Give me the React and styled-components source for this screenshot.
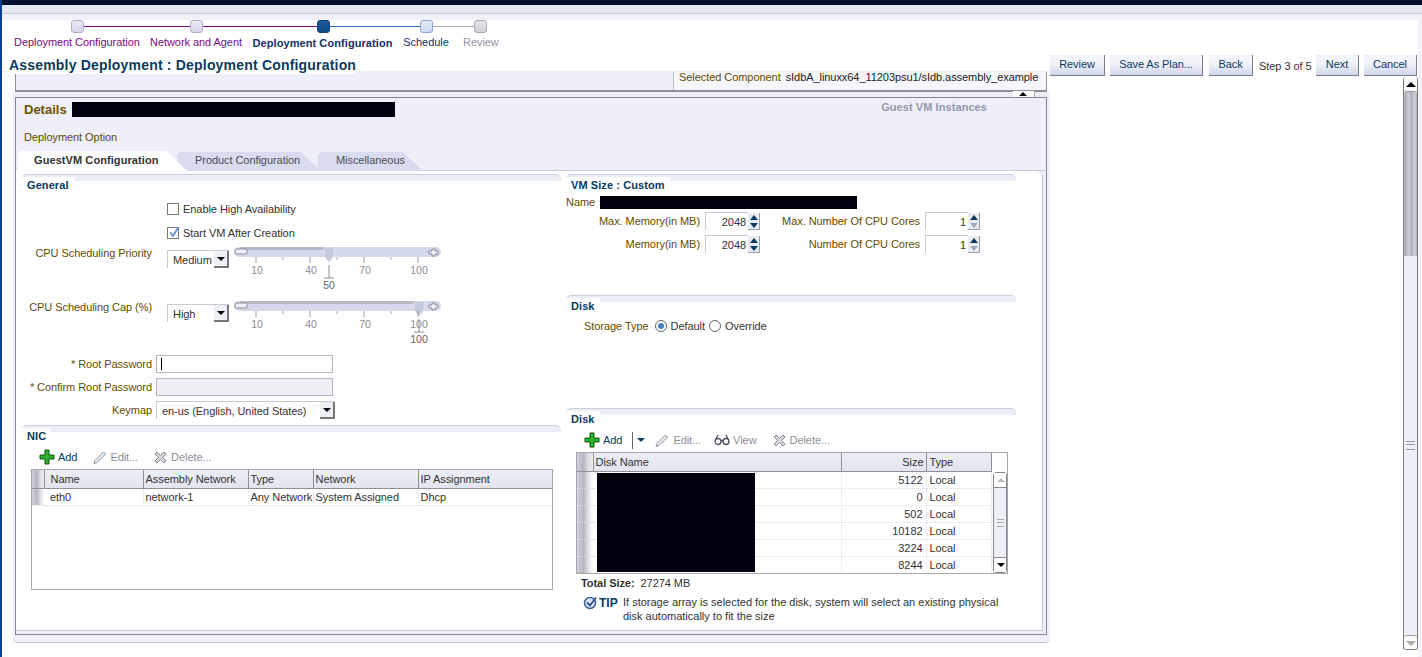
import React from "react";
import styled, { createGlobalStyle } from "styled-components";

const Global = createGlobalStyle`
  html, body { margin: 0; padding: 0; background: #001a3d; overflow: hidden; }
  * { box-sizing: border-box; }
  body { font-family: "Liberation Sans", Arial, sans-serif; font-size: 11px; letter-spacing: -.06px; color: #333; }
`;

const Screen = styled.div`
  width: 1422px; height: 657px; display: flex; flex-direction: column; overflow: hidden;
  background: linear-gradient(90deg, #0a3f8e 0, #0a3f8e 2px, #00102e 2px);
`;
const Frame = styled.div`
  margin: 5px 0 0 2px; flex: 1; background: #fff; border-top-left-radius: 4px; display: flex; flex-direction: column;
  border-right: 4px solid #f3f4fb;
`;
const TopBand = styled.div`
  height: 15px; flex: none; background: linear-gradient(#e4e8f3 0 8px, #c9ccd8 8px 9px, #f1f2f9 9px);
  margin-right: -4px;
`;
const Columns = styled.div`flex: 1; display: flex; min-height: 0;`;
const LeftCol = styled.div`width: 1048px; flex: none; display: flex; flex-direction: column;`;
const RightCol = styled.div`flex: 1; display: flex; flex-direction: column; padding-top: 35px;`;

const TrainTrack = styled.div`display: flex; align-items: center; height: 13px; padding-left: 69px;`;
const Node = styled.div`
  width: 13px; height: 13px; border-radius: 3px; flex: none;
  border: 1px solid ${p => p.$edge}; background: ${p => p.$fill};
`;
const Connector = styled.div`height: 1.5px; flex: none; width: ${p => p.$w}px; background: ${p => p.$c};`;
const TrainLabels = styled.div`display: flex; padding-left: 12px; margin-top: 2px;`;
const TrainLabel = styled.div`
  flex: none; width: ${p => p.$w}px; margin-right: ${p => p.$gap}px; text-align: center; white-space: nowrap;
  line-height: 14px; color: ${p => p.$c}; font-weight: ${p => (p.$bold ? 700 : 400)};
  padding-top: ${p => (p.$bold ? 1 : 0)}px; letter-spacing: ${p => (p.$bold ? ".08px" : "inherit")};
`;
const TitleRow = styled.div`height: 22px; padding: 7px 0 0 7px; box-shadow: inset 0 -1px 0 #eceef5;`;
const Title = styled.h1`
  margin: 0; font-size: 14px; line-height: 17px; font-weight: 700; color: #0b3a5e; letter-spacing: .19px;
  white-space: nowrap; width: fit-content; background: #fff; position: relative; z-index: 1;
`;

const TopPanel = styled.div`
  margin-left: 13px; width: 1032px; height: 20px; flex: none; display: flex; justify-content: flex-end;
  background: #eeeff8; border: solid #8f8f99; border-width: 0 1px 2px 1px; overflow: hidden;
`;
const SelectedBox = styled.div`
  width: 373px; background: #f6f7fc; border-left: 1px solid #b9bcca; padding-left: 5px;
  line-height: 14px; margin-top: -2px; white-space: nowrap; color: #222;
  span { color: #5f4b00; margin-right: 5px; }
`;
const SplitterGrip = styled.div`
  position: absolute; left: 1000px; top: -1px; width: 22px; height: 6px; background: #fff; border: solid #aaa; border-width: 0 1px 0 0;
  &::after { content: ""; position: absolute; left: 6px; top: 1px; border: solid transparent; border-width: 0 4px 4px; border-bottom-color: #000; }
`;
const Shell = styled.div`
  margin-left: 11px; width: 1037px; flex: none; padding: 5px 3px 7px 2px; background: #eeeff8;
  border-bottom: 1px solid #c4c1d6; border-radius: 0 0 5px 5px; position: relative;
`;
const Details = styled.section`
  border: 1px solid #85858f; height: 538px; display: flex; flex-direction: column;
`;
const DetailsHead = styled.div`display: flex; align-items: center; height: 21px; padding: 1px 59px 0 8px; flex: none;`;
const DetailsTitle = styled.h2`margin: 0; width: 48px; font-size: 13px; font-weight: 700; color: #6d5200; letter-spacing: 0; flex: none;`;
const Redact = styled.div`background: #01000f; width: ${p => p.$w}px; height: ${p => p.$h}px; flex: none;`;
const GuestLink = styled.div`margin-left: auto; color: #9398ac; font-weight: 700; letter-spacing: .07px; margin-top: -4px;`;
const Option = styled.div`color: #5f4b00; margin: 11px 0 0 8px; height: 14px; line-height: 14px; flex: none;`;
const Tabs = styled.div`display: flex; height: 20px; margin: 7px 0 0 2px; flex: none; align-items: flex-end; box-shadow: inset 0 -1px 0 #c6cce0;`;
const Tab = styled.div`
  height: ${p => (p.$active ? 20 : 19)}px; width: ${p => p.$w}px; margin-left: ${p => p.$ml || 0}px; flex: none;
  padding-left: ${p => p.$pl}px; line-height: ${p => (p.$active ? 19 : 17)}px; white-space: nowrap;
  background: ${p => (p.$active ? "#fff" : "#d8dcee")};
  color: ${p => (p.$active ? "#333" : "#4a4d55")}; font-weight: ${p => (p.$active ? 700 : 400)};
  letter-spacing: ${p => (p.$active ? ".08px" : "inherit")};
  clip-path: polygon(0 3px, 3px 0, calc(100% - 20px) 0, 100% 100%, 0 100%);
  z-index: ${p => (p.$active ? 2 : 1)};
`;
const Body = styled.div`
  flex: 1; display: flex; gap: 5px; background: #fff; margin-right: 3px; padding: 3px 0 0 6px; min-height: 0;
  border-right: 1px solid #c6cce0; border-bottom: 1px solid #c6cce0; margin-bottom: 3px; border-top-right-radius: 6px;
`;
const Col = styled.div`width: ${p => p.$w}px; flex: none; display: flex; flex-direction: column;`;
const SectionHead = styled.div`
  height: 17px; flex: none; border-top: 1px solid #ccd0de; border-radius: 5px 5px 0 0; margin-top: ${p => p.$mt || 0}px;
  background: linear-gradient(#eceef7 0 6px, #fff 6px);
`;
const SectionTitle = styled.h3`
  margin: 0; padding: 3px 5px 0; display: inline-block; font-size: 11px; line-height: 14px; font-weight: 700; color: #0b3a5e;
  letter-spacing: .08px; background: linear-gradient(transparent 0 2px, #fff 2px); height: 16px;
`;
const CheckRow = styled.label`
  display: flex; align-items: center; gap: 4px; height: 14px; margin: ${p => p.$mt}px 0 0 145px; color: #333;
`;
const CheckBox = styled.span`
  width: 12px; height: 12px; border: 1px solid #777; background: #fff; display: block; flex: none; position: relative;
  svg { position: absolute; left: 0; top: -1px; }
`;
const SliderRow = styled.div`display: flex; height: 45px; margin-top: ${p => p.$mt}px; align-items: flex-start;`;
const RightLabel = styled.div`
  width: ${p => p.$w}px; text-align: right; flex: none; color: #5f4b00; line-height: 14px; white-space: nowrap;
  margin-top: ${p => p.$mt || 0}px;
`;
const SelectBox = styled.div`
  width: ${p => p.$w}px; height: 18px; flex: none; margin: ${p => p.$mt || 0}px ${p => p.$mr || 0}px 0 ${p => p.$ml || 0}px;
  display: flex; align-items: center; justify-content: space-between; padding-left: 5px; color: #333;
  border: 1px solid #c9c9d2; border-right: 0; border-bottom: 0; white-space: nowrap; background: #fff;
`;
const SelectBtn = styled.span`
  width: 15px; height: 17px; background: #eef0f7; border-right: 2px solid #777; border-bottom: 2px solid #777; position: relative; flex: none;
  &::after { content: ""; position: absolute; left: 3px; top: 6px; border: solid transparent; border-width: 4px 4px 0; border-top-color: #000; }
`;
const FormRow = styled.div`display: flex; align-items: center; height: 18px; margin-top: ${p => p.$mt}px;`;
const TextInput = styled.div`
  width: 177px; height: 18px; margin-left: 4px; position: relative; flex: none;
  border: 1px solid #b5b7c2; background: ${p => (p.$off ? "#eef0f6" : "#fff")};
  ${p => p.$caret && `&::before { content: ""; position: absolute; left: 4px; top: 2px; width: 1px; height: 12px; background: #000; }`}
`;
const Toolbar = styled.div`
  display: flex; align-items: center; height: 20px; margin: ${p => p.$mt}px 0 0 ${p => p.$ml}px; flex: none;
`;
const ToolBtn = styled.div`
  display: flex; align-items: center; gap: ${p => p.$gap ?? 3}px; margin-right: ${p => p.$mr ?? 0}px;
  color: ${p => (p.$on ? "#0b3a5e" : "#8c8f9a")}; white-space: nowrap;
`;
const ToolSep = styled.div`
  width: 1px; height: 17px; background: #666; margin: 0 4px 0 0;
`;
const DownTri = styled.span`
  width: 0; height: 0; border: solid transparent; border-width: 4px 4px 0; border-top-color: #0b3a5e; margin-right: 9px;
`;
const TableFrame = styled.div`
  margin: ${p => p.$mt}px 0 0 ${p => p.$ml}px; width: ${p => p.$w}px; height: ${p => p.$h}px; border: 1px solid #a6a6ae; flex: none; position: relative;
  display: flex; overflow: hidden;
`;
const Grid = styled.table`
  border-collapse: collapse; table-layout: fixed; width: ${p => p.$w}px; height: fit-content; flex: none;
`;
const Th = styled.th`
  height: 18px; padding: 0 2px 0 ${p => p.$pl ?? 2}px; font-weight: 400; color: #333; background: linear-gradient(#eceef6, #e2e4ee);
  border-right: 1px solid #8f8f98; border-bottom: 1px solid #8f8f98; text-align: ${p => p.$align || "left"}; white-space: nowrap; overflow: hidden;
  ${p => p.$w && `width: ${p.$w}px;`}
`;
const SelCell = styled.td`
  width: ${p => p.$w}px; padding: 0; background: linear-gradient(90deg, #cfd0d8, #b5b6c0 40%, #dddde5 70%, #fff);
  border-bottom: 1px dotted #dfe1e9;
`;
const SelHead = styled(Th)`
  padding: 0; background: linear-gradient(90deg, #cfd0d8, #b5b6c0 40%, #dddde5 70%, #eee);
`;
const Td = styled.td`
  height: ${p => p.$h}px; padding: 0 3px 0 ${p => p.$pl ?? 5}px; color: #333; white-space: nowrap; overflow: hidden; text-align: ${p => p.$align || "left"};
  border-bottom: 1px dotted #d9dbe5; border-right: 1px dotted #dcdee6;
`;
const DiskRedact = styled(Redact)`position: absolute; left: 20px; top: 20px;`;
const MiniScroll = styled.div`
  flex: 1; margin-top: 19px; margin-left: 1px; display: flex; flex-direction: column; border: 1px solid #85858a; border-radius: 3px; background: #eef0f8;
`;
const MiniBtn = styled.div`
  height: 15px; flex: none; background: #fff; position: relative; border-bottom: ${p => (p.$up ? "1px solid #888" : 0)};
  border-top: ${p => (p.$up ? 0 : "1px solid #888")};
  &::after {
    content: ""; position: absolute; left: 3px; top: 5px; border: solid transparent;
    border-width: ${p => (p.$up ? "0 4px 4px" : "4px 4px 0")};
    ${p => (p.$up ? "border-bottom-color: #bbb;" : "border-top-color: #000;")}
  }
`;
const MiniThumb = styled.div`
  flex: 1; display: flex; align-items: center; justify-content: center;
  &::after { content: ""; width: 7px; height: 6px; border-top: 1px solid #aaa; border-bottom: 1px solid #aaa; background: linear-gradient(transparent 2px, #aaa 2px 3px, transparent 3px); }
`;
const NameRow = styled.div`display: flex; align-items: center; height: 14px; margin-top: 4px; color: #5f4b00; gap: 8px; span { width: 26px; }`;
const SpinRow = styled.div`display: flex; align-items: center; height: 18px; margin-top: ${p => p.$mt}px;`;
const SpinInput = styled.div`
  width: 43px; height: 18px; flex: none; text-align: right; padding-right: 2px; line-height: 18px; color: #333; margin-left: 5px;
  border: 1px solid #c9c9d2; border-right: 0; border-bottom: 0; background: #fff;
`;
const Spin = styled.div`
  width: 12px; height: 17px; flex: none; display: flex; flex-direction: column; border: 1px solid #9a9ea8; border-width: 0 1px 1px 0;
`;
const SpinPart = styled.div`
  flex: 1; background: #e9ebf3; position: relative;
  &::after {
    content: ""; position: absolute; left: 2px; top: 2px; border: solid transparent;
    border-width: ${p => (p.$up ? "0 4px 5px" : "5px 4px 0")};
    ${p => `border-${p.$up ? "bottom" : "top"}-color: ${p.$dim && !p.$up ? "#9fa8b8" : "#0b3a5e"};`}
  }
`;
const RadioRow = styled.div`display: flex; align-items: center; height: 14px; margin: 7px 0 0 18px; color: #333;`;
const StorageLabel = styled.span`color: #5f4b00; margin-right: 6px;`;
const Radio = styled.span`
  width: 12px; height: 12px; border-radius: 50%; border: 1px solid #666; background: #fff; flex: none; margin: 0 4px 0 ${p => p.$ml || 0}px; position: relative;
  ${p => p.$on && `&::after { content: ""; position: absolute; left: 2px; top: 2px; width: 6px; height: 6px; border-radius: 50%; background: #4a7fc0; }`}
`;
const Total = styled.div`margin: 1px 0 0 15px; height: 16px; line-height: 16px; flex: none; b { color: #333; margin-right: 6px; }`;
const TipRow = styled.div`display: flex; margin: 4px 0 0 17px; align-items: flex-start;`;
const TipMark = styled.div`
  display: flex; align-items: center; gap: 1px; font-weight: 700; color: #0b3a5e; width: 40px; flex: none; line-height: 14px; font-size: 12px; letter-spacing: 0;
`;
const TipText = styled.p`margin: 0; width: 385px; line-height: 14px; color: #333; letter-spacing: 0;`;

const ActionBar = styled.div`display: flex; align-items: center; height: 21px; flex: none;`;
const Btn = styled.div`
  width: ${p => p.$w}px; height: 21px; margin-right: ${p => p.$mr}px; flex: none; text-align: center; line-height: 19px; color: #0b3a5e;
  background: linear-gradient(#f6f7fc, #f0f2f9 45%, #ced6ea); border: solid #7b7f8a; border-width: 0 1px 1px 0; box-shadow: inset 0 1px 0 #eef;
`;
const StepInfo = styled.div`width: 57px; flex: none; color: #333; padding-top: 1px; white-space: nowrap;`;
const PageArea = styled.div`flex: 1; display: flex; justify-content: flex-end; margin-top: 1px; margin-bottom: 7px;`;
const Scroll = styled.div`
  width: 15px; display: flex; flex-direction: column; border: solid #7f7a72; border-width: 0 1px 0 1px; border-radius: 3px;
`;
const ScrollBtn = styled.div`
  height: 15px; flex: none; background: #fbfbfd; position: relative; border-radius: 3px;
  border-bottom: ${p => (p.$up ? "1px solid #999" : "1px solid #7f7a72")}; border-top: ${p => (p.$up ? 0 : "1px solid #999")};
  &::after {
    content: ""; position: absolute; left: 2px; top: 5px; border: solid transparent;
    border-width: ${p => (p.$up ? "0 5px 5px" : "5px 5px 0")};
    ${p => (p.$up ? "border-bottom-color: #000;" : "border-top-color: #aaa;")}
  }
`;
const ScrollTrack = styled.div`
  height: 164px; flex: none; background: repeating-linear-gradient(90deg, #b3b6c0 0 3px, #c7c9d2 3px 6px);
`;
const ScrollThumb = styled.div`
  flex: 1; background: #eef0f9; display: flex; align-items: center; justify-content: center;
  &::after { content: ""; width: 9px; height: 7px; border-top: 1px solid #999; border-bottom: 1px solid #999; background: linear-gradient(transparent 2px, #999 2px 3px, transparent 3px); }
`;

const Plus = () => (
  <svg width="16" height="16" viewBox="0 0 16 16"><path d="M6 1h4v5h5v4h-5v5H6v-5H1V6h5z" fill="#2fae2f" stroke="#0d5a0d" strokeWidth="1" /></svg>
);
const PencilIcon = () => (
  <svg width="16" height="16" viewBox="0 0 16 16"><path d="M3 11.5 11.5 3l2 2L5 13.5l-3 1z" fill="#eceef3" stroke="#8d9099" strokeWidth="1" /></svg>
);
const DeleteIcon = () => (
  <svg width="15" height="15" viewBox="0 0 15 15"><path d="M2 4l2-2 3.500 3.500L11 2l2 2-3.500 3.500L13 11l-2 2-3.500-3.500L4 13l-2-2 3.500-3.500z" fill="#d6d8de" stroke="#85878f" strokeWidth="1" /></svg>
);
const GlassesIcon = () => (
  <svg width="16" height="12" viewBox="0 0 16 12" fill="none" stroke="#4a5060" strokeWidth="1.300"><circle cx="4" cy="7.500" r="3" /><circle cx="12" cy="7.500" r="3" /><path d="M7 7q1-1 2 0M2 5l2-4M14 5l-2-4" /></svg>
);
const TipIcon = () => (
  <svg width="15" height="15" viewBox="0 0 15 15"><circle cx="7" cy="8" r="5.500" fill="#dfe6f5" stroke="#3b5f96" strokeWidth="1.500" /><path d="M4 7.500l3 3 6-8" fill="none" stroke="#2c4f86" strokeWidth="1.800" /></svg>
);
const Check = () => (
  <svg width="12" height="12" viewBox="0 0 12 12"><path d="M2 5.500l3 3.500 5-8" fill="none" stroke="#5b8fd0" strokeWidth="1.800" /></svg>
);

const Slider = ({ x, label }) => {
  const ticks = [[22, "10"], [76, "40"], [130, "70"], [184, "100"]];
  const minor = [49, 103, 157];
  return (
    <svg width="208" height="45" viewBox="0 0 208 45">
      <rect x="0" y="0" width="207" height="10" rx="5" fill="#d3d8ea" />
      <rect x="6" y="0" width={x - 6} height="3" fill="#b5b9c8" />
      <rect x="1" y="2" width="12" height="5" rx="1" fill="#eef0f8" stroke="#8b8e9a" />
      <path d="M195 4h3v-2h3v2h3v3h-3v2h-3v-2h-3z" fill="#eef0f8" stroke="#8b8e9a" />
      <path d={`M${x - 5} 0h10v9l-5 6-5-6z`} fill="#c5cadd" stroke="#dfe2ee" />
      {ticks.map(([t]) => <path key={t} d={`M${t} 10v6`} stroke="#9a9dab" />)}
      {minor.map(t => <path key={t} d={`M${t} 10v3`} stroke="#a8abb8" />)}
      {ticks.map(([t, l]) => (
        <text key={l} x={t + 1} y="27" textAnchor="middle" fontSize="10.500" fill="#8a8c94" fontFamily="Liberation Sans">{l}</text>
      ))}
      <path d={`M${x} 18v13M${x - 5} 31h10`} stroke="#8b8e9a" />
      <text x={x} y="42" textAnchor="middle" fontSize="10.500" fill="#666" fontFamily="Liberation Sans">{label}</text>
    </svg>
  );
};

const Spinner = ({ dim }) => (
  <Spin><SpinPart $up /><SpinPart $dim={dim} /></Spin>
);

const disks = ["5122", "0", "502", "10182", "3224", "8244"];

export default function App() {
  return (
    <Screen>
      <Global />
      <Frame>
        <TopBand />
        <Columns>
          <LeftCol>
            <TrainTrack>
              <Node $edge="#b5a9cc" $fill="linear-gradient(#ecebf5,#d8d5e8)" />
              <Connector $w={106} $c="#7c0a83" />
              <Node $edge="#b5a9cc" $fill="linear-gradient(#ecebf5,#d8d5e8)" />
              <Connector $w={114} $c="#7c0a83" />
              <Node $edge="#0f3f78" $fill="linear-gradient(#1c5b9c,#0f4a86)" />
              <Connector $w={90} $c="#2a74c0" />
              <Node $edge="#8fa6d4" $fill="linear-gradient(#e3e9f8,#cdd8f1)" />
              <Connector $w={41} $c="#a9abb3" />
              <Node $edge="#a5a8b2" $fill="linear-gradient(#e8e9ee,#cfd1d8)" />
            </TrainTrack>
            <TrainLabels>
              <TrainLabel $w={125} $gap={10} $c="#7c0a83">Deployment Configuration</TrainLabel>
              <TrainLabel $w={94} $gap={9} $c="#7c0a83">Network and Agent</TrainLabel>
              <TrainLabel $w={141} $gap={10} $c="#13306f" $bold>Deployment Configuration</TrainLabel>
              <TrainLabel $w={46} $gap={14} $c="#13306f">Schedule</TrainLabel>
              <TrainLabel $w={35} $gap={0} $c="#92959e">Review</TrainLabel>
            </TrainLabels>
            <TitleRow><Title>Assembly Deployment : Deployment Configuration</Title></TitleRow>
            <TopPanel>
              <SelectedBox><span>Selected Component</span>sIdbA_linuxx64_11203psu1/sIdb.assembly_example</SelectedBox>
            </TopPanel>
            <Shell>
              <SplitterGrip />
              <Details>
                <DetailsHead>
                  <DetailsTitle>Details</DetailsTitle>
                  <Redact $w={323} $h={15} />
                  <GuestLink>Guest VM Instances</GuestLink>
                </DetailsHead>
                <Option>Deployment Option</Option>
                <Tabs>
                  <Tab $active $w={169} $pl={16}>GuestVM Configuration</Tab>
                  <Tab $w={144} $pl={18} $ml={-10}>Product Configuration</Tab>
                  <Tab $w={105} $pl={18} $ml={-3}>Miscellaneous</Tab>
                </Tabs>
                <Body>
                  <Col $w={539}>
                    <SectionHead><SectionTitle>General</SectionTitle></SectionHead>
                    <CheckRow $mt={11}><CheckBox />Enable High Availability</CheckRow>
                    <CheckRow $mt={10}><CheckBox><Check /></CheckBox>Start VM After Creation</CheckRow>
                    <SliderRow $mt={7}>
                      <RightLabel $w={130} $mt={-1}>CPU Scheduling Priority</RightLabel>
                      <SelectBox $w={62} $ml={15} $mr={5} $mt={3}>Medium<SelectBtn /></SelectBox>
                      <Slider x={95} label="50" />
                    </SliderRow>
                    <SliderRow $mt={9}>
                      <RightLabel $w={130} $mt={-1}>CPU Scheduling Cap (%)</RightLabel>
                      <SelectBox $w={62} $ml={15} $mr={5} $mt={3}>High<SelectBtn /></SelectBox>
                      <Slider x={185} label="100" />
                    </SliderRow>
                    <FormRow $mt={9}><RightLabel $w={130}>* Root Password</RightLabel><TextInput $caret /></FormRow>
                    <FormRow $mt={5}><RightLabel $w={130}>* Confirm Root Password</RightLabel><TextInput $off /></FormRow>
                    <FormRow $mt={5}><RightLabel $w={130}>Keymap</RightLabel><SelectBox $w={179} $ml={4}>en-us (English, United States)<SelectBtn /></SelectBox></FormRow>
                    <SectionHead $mt={6}><SectionTitle>NIC</SectionTitle></SectionHead>
                    <Toolbar $mt={5} $ml={17}>
                      <ToolBtn $on $mr={15}><Plus />Add</ToolBtn>
                      <ToolBtn $mr={15} $gap={2}><PencilIcon />Edit...</ToolBtn>
                      <ToolBtn><DeleteIcon />Delete...</ToolBtn>
                    </Toolbar>
                    <TableFrame $mt={2} $ml={9} $w={522} $h={121}>
                      <Grid $w={521}>
                        <thead>
                          <tr>
                            <SelHead $w={12} />
                            <Th $w={99} $pl={6}>Name</Th>
                            <Th $w={105}>Assembly Network</Th>
                            <Th $w={65}>Type</Th>
                            <Th $w={105}>Network</Th>
                            <Th>IP Assignment</Th>
                          </tr>
                        </thead>
                        <tbody>
                          <tr>
                            <SelCell $w={12} />
                            <Td $h={17} $pl={6}>eth0</Td>
                            <Td $h={17} $pl={2}>network-1</Td>
                            <Td $h={17} $pl={2}>Any Network</Td>
                            <Td $h={17} $pl={2}>System Assigned</Td>
                            <Td $h={17} $pl={2}>Dhcp</Td>
                          </tr>
                        </tbody>
                      </Grid>
                    </TableFrame>
                  </Col>
                  <Col $w={450}>
                    <SectionHead><SectionTitle>VM Size : Custom</SectionTitle></SectionHead>
                    <NameRow><span>Name</span><Redact $w={257} $h={13} /></NameRow>
                    <SpinRow $mt={3}>
                      <RightLabel $w={134}>Max. Memory(in MB)</RightLabel>
                      <SpinInput>2048</SpinInput><Spinner />
                      <RightLabel $w={160}>Max. Number Of CPU Cores</RightLabel>
                      <SpinInput>1</SpinInput><Spinner dim />
                    </SpinRow>
                    <SpinRow $mt={5}>
                      <RightLabel $w={134}>Memory(in MB)</RightLabel>
                      <SpinInput>2048</SpinInput><Spinner />
                      <RightLabel $w={160}>Number Of CPU Cores</RightLabel>
                      <SpinInput>1</SpinInput><Spinner dim />
                    </SpinRow>
                    <SectionHead $mt={42}><SectionTitle>Disk</SectionTitle></SectionHead>
                    <RadioRow>
                      <StorageLabel>Storage Type</StorageLabel>
                      <Radio $on />Default<Radio $ml={4} />Override
                    </RadioRow>
                    <SectionHead $mt={75}><SectionTitle>Disk</SectionTitle></SectionHead>
                    <Toolbar $mt={5} $ml={18}>
                      <ToolBtn $on $mr={10}><Plus />Add</ToolBtn>
                      <ToolSep />
                      <DownTri />
                      <ToolBtn $mr={13}><PencilIcon />Edit...</ToolBtn>
                      <ToolBtn $mr={15}><GlassesIcon />View</ToolBtn>
                      <ToolBtn><DeleteIcon />Delete...</ToolBtn>
                    </Toolbar>
                    <TableFrame $mt={2} $ml={10} $w={432} $h={122}>
                      <Grid $w={415}>
                        <thead>
                          <tr>
                            <SelHead $w={16} />
                            <Th $w={248}>Disk Name</Th>
                            <Th $w={85} $align="right">Size</Th>
                            <Th $pl={3}>Type</Th>
                          </tr>
                        </thead>
                        <tbody>
                          {disks.map(s => (
                            <tr key={s}>
                              <SelCell $w={16} />
                              <Td $h={17} />
                              <Td $h={17} $align="right">{s}</Td>
                              <Td $h={17} $pl={3}>Local</Td>
                            </tr>
                          ))}
                        </tbody>
                      </Grid>
                      <MiniScroll>
                        <MiniBtn $up />
                        <MiniThumb />
                        <MiniBtn />
                      </MiniScroll>
                      <DiskRedact $w={158} $h={99} />
                    </TableFrame>
                    <Total><b>Total Size:</b>27274 MB</Total>
                    <TipRow>
                      <TipMark><TipIcon />TIP</TipMark>
                      <TipText>If storage array is selected for the disk, system will select an existing physical disk automatically to fit the size</TipText>
                    </TipRow>
                  </Col>
                </Body>
              </Details>
            </Shell>
          </LeftCol>
          <RightCol>
            <ActionBar>
              <Btn $w={55} $mr={5}>Review</Btn>
              <Btn $w={93} $mr={6}>Save As Plan...</Btn>
              <Btn $w={44} $mr={6}>Back</Btn>
              <StepInfo>Step 3 of 5</StepInfo>
              <Btn $w={43} $mr={5}>Next</Btn>
              <Btn $w={53} $mr={0}>Cancel</Btn>
            </ActionBar>
            <PageArea>
              <Scroll>
                <ScrollBtn $up />
                <ScrollTrack />
                <ScrollThumb />
                <ScrollBtn />
              </Scroll>
            </PageArea>
          </RightCol>
        </Columns>
      </Frame>
    </Screen>
  );
}
